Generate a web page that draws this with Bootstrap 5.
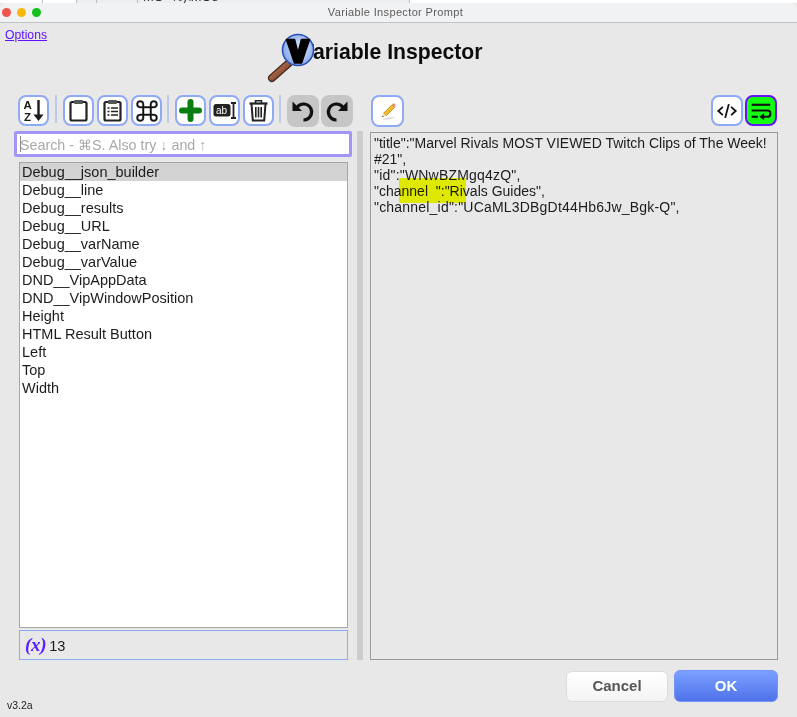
<!DOCTYPE html>
<html lang="en">
<head>
<meta charset="utf-8">
<title>Variable Inspector Prompt</title>
<link href="https://cdn.jsdelivr.net/npm/bootstrap@5.3.0/dist/css/bootstrap.min.css" rel="stylesheet">
<style>
html,body{height:100%;}
body{margin:0;width:797px;height:717px;overflow:hidden;background:#e8e8e8;font-family:"Liberation Sans",Arial,sans-serif;font-size:14px;color:#1c1c1c;}
.behind-strip{height:3px;background:#fff;overflow:hidden;}
.behind-strip-inner{height:3px;margin-left:42px;width:368px;position:relative;border-left:1px solid #bbb;border-right:1px solid #bbb;background:linear-gradient(90deg,#fff 0 33px,#bbb 33px 34px,#eee 34px 53px,#bbb 53px 54px,#eee 54px 94px,#bbb 94px 95px,#eee 95px);}
.behind-text{position:absolute;left:100px;top:-10px;font-size:13px;line-height:13px;color:#333;white-space:nowrap;}
.title-bar{height:20px;background:#f1f2f4;border-bottom:1px solid #c2c2c2;border-radius:6px 6px 0 0;padding-left:2px;}
.tl-dot{width:9px;height:9px;border-radius:50%;margin-right:6px;}
.tl-red{background:#f0544c;}.tl-yellow{background:#f6b90f;}.tl-green{background:#12c21a;}
.title-text{width:100%;margin-left:-49px;text-align:center;font-size:11px;color:#5c5c5c;letter-spacing:.36px;}
.head-row{height:72px;position:relative;padding-left:5px;padding-top:5px;}
.opt-link{font-size:12.2px;line-height:15px;color:#5b12ff;}
.opt-link:hover{color:#5b12ff;}
.app-heading{position:relative;margin:0;margin-left:253px;margin-top:12px;font-size:21.2px;font-weight:700;line-height:24px;color:#0c0c0c;font-family:"Liberation Sans",Arial,sans-serif;}
.app-logo{position:absolute;left:-37px;top:-14px;width:60px;height:60px;}
.tool-row{height:32px;padding-left:18px;padding-right:20px;}
.tool-btn{width:31px;height:31px;padding:0;background:#fff;border:2px solid #8eaaf6;border-radius:8px;margin-right:3px;}
.tool-btn:hover{background:#fff;border-color:#8eaaf6;}
.tool-btn svg{display:block;margin:auto;}
.tool-btn.is-off{width:32px;height:32px;background:#c6c6c6;border-color:#c6c6c6;margin-right:2px;}
.tool-btn.is-on{width:32px;background:#12ff12;border-color:#6414f5;}
.tool-sep{width:2px;height:28px;background:#bcc9ec;margin:0 6px 0 2px;}
.tool-sep:first-of-type{margin-left:3px;}
.pencil-btn{width:33px;height:32px;margin-left:16px;}
.tool-end{width:32px;margin-left:auto;margin-right:2px;}
.work-row{margin-top:4px;height:529px;}
.left-col{width:338px;margin-left:14px;}
.search-wrap{position:relative;}
.search-box{height:26px;padding:2px 0 0 3px;border:3px solid #a196f8;border-radius:2px;font-size:14.3px;background:#fff;box-shadow:none;font-family:"Liberation Sans",Arial,sans-serif;}
.search-box::placeholder{color:#a9a9a9;opacity:1;}
.search-caret{position:absolute;left:6px;top:5px;width:1px;height:16px;background:#8a8a8a;}
.var-list{margin:5px 4px 0 5px;height:466px;border:1px solid #a6a6a6;border-radius:0;background:#fff;padding:0;display:block;}
.var-item{height:18px;line-height:18px;padding:0 0 0 2px;border:0;font-size:14.5px;color:#1c1c1c;background:#fff;}
.var-item.is-picked{background:#d3d3d3;}
.count-bar{margin:2px 4px 0 5px;height:30px;border:1px solid #8eaaf6;padding-left:5px;font-size:14.5px;}
.fx-mark{font-family:"Liberation Serif",serif;font-weight:700;font-style:italic;font-size:19px;color:#5a1cff;margin-right:3px;letter-spacing:-.3px;}
.count-num{padding-top:3px;}
.split-bar{width:6px;margin-left:5px;background:#cdcdcd;}
.out-pane{position:relative;width:408px;margin-left:7px;margin-top:1px;border:1px solid #9a9a9a;padding:2px 3px;line-height:16px;font-size:14px;overflow:hidden;color:#1c1c1c;}
.out-line{white-space:pre-wrap;}
.out-line.is-loose{letter-spacing:.2px;}
.hl-mark{position:absolute;left:28px;top:45px;width:67px;height:25px;background:#f6ff00;mix-blend-mode:multiply;}
.foot-row{height:57px;position:relative;padding-right:19px;padding-top:10px;}
.ver-text{position:absolute;left:7px;top:39px;font-size:10.500px;line-height:12px;color:#222;}
.act-btn{height:32px;padding:0;font-size:15px;font-weight:700;border-radius:6px;}
.cancel-btn{width:102px;margin-right:6px;margin-top:1px;height:31px;background:linear-gradient(#fff,#f4f4f4);border:1px solid #dcdcdc;color:#555;}
.cancel-btn:hover{background:#fff;border-color:#dcdcdc;color:#555;}
.ok-btn{width:104px;background:linear-gradient(#7ba0ff,#4f72ea);border:1px solid #7496f8;color:#fff;}
.ok-btn:hover{background:#5f85f2;border-color:#7496f8;color:#fff;}
</style>
</head>
<body>
<div class="behind-strip"><div class="behind-strip-inner"><span class="behind-text">MO_%)\MO8</span></div></div>
<div class="title-bar d-flex align-items-center">
  <span class="tl-dot tl-red flex-shrink-0"></span><span class="tl-dot tl-yellow flex-shrink-0"></span><span class="tl-dot tl-green flex-shrink-0"></span>
  <div class="title-text">Variable Inspector Prompt</div>
</div>
<div class="head-row d-flex align-items-start">
  <a href="#" class="opt-link">Options</a>
  <h1 class="app-heading">Variable Inspector
    <svg class="app-logo" viewBox="0 0 60 60" aria-hidden="true">
      <defs>
        <radialGradient id="lensFill" cx=".55" cy=".45" r=".6"><stop offset="0" stop-color="#e4ecff"/><stop offset="1" stop-color="#7ea2ea"/></radialGradient>
        <linearGradient id="stickFill" x1="0" y1="0" x2="1" y2="1"><stop offset="0" stop-color="#c98562"/><stop offset="1" stop-color="#6d2f1a"/></linearGradient>
      </defs>
      <path d="M26 37 L9 52" stroke="#3c2a20" stroke-width="8" stroke-linecap="round" fill="none"/>
      <path d="M26 37 L9 52" stroke="url(#stickFill)" stroke-width="5.600" stroke-linecap="round" fill="none"/>
      <circle cx="35" cy="24" r="15.500" fill="url(#lensFill)" stroke="#2a4fb4" stroke-width="1.600"/>
      <path d="M23.500 13.500 L31.500 13.500 L35 27 L38.500 13.500 L46.500 13.500 L38.500 37 L31.500 37 Z" fill="#000" stroke="#000" stroke-width="1.600" stroke-linejoin="round"/>
    </svg>
  </h1>
</div>
<div class="tool-row d-flex align-items-start">
  <button class="btn tool-btn" aria-label="Sort"><svg width="27" height="27" viewBox="0 0 27 27"><text x="3.500" y="12" font-family="Liberation Sans" font-weight="700" font-size="11.500" fill="#1a1a1a">A</text><text x="4" y="24" font-family="Liberation Sans" font-weight="700" font-size="11.500" fill="#1a1a1a">Z</text><path d="M18.500 3V21" stroke="#1a1a1a" stroke-width="2.400"/><path d="M13.500 17.500H23.500L18.500 24Z" fill="#1a1a1a"/></svg></button>
  <span class="tool-sep"></span>
  <button class="btn tool-btn" aria-label="Copy"><svg width="27" height="27" viewBox="0 0 27 27"><rect x="5.500" y="5" width="16" height="18.500" rx="1.500" fill="none" stroke="#222" stroke-width="2.200"/><rect x="9" y="3" width="9" height="4" rx="1" fill="#555"/></svg></button>
  <button class="btn tool-btn" aria-label="Paste list"><svg width="27" height="27" viewBox="0 0 27 27"><rect x="5.500" y="5" width="16" height="18.500" rx="1.500" fill="none" stroke="#222" stroke-width="2.200"/><rect x="9" y="3" width="9" height="4" rx="1" fill="#555"/><path d="M8.500 11h2M12 11h7M8.500 14.500h2M12 14.500h7M8.500 18h2M12 18h7" stroke="#222" stroke-width="1.600"/></svg></button>
  <button class="btn tool-btn" aria-label="Command"><svg width="24" height="24" viewBox="0 0 16 16" fill="#111" stroke="#111" stroke-width=".3"><path d="M3.500 2A1.500 1.500 0 0 1 5 3.500V5H3.500a1.500 1.500 0 1 1 0-3zM6 5V3.500A2.500 2.500 0 1 0 3.500 6H5v4H3.500A2.500 2.500 0 1 0 6 12.500V11h4v1.500a2.500 2.500 0 1 0 2.500-2.500H11V6h1.500A2.500 2.500 0 1 0 10 3.500V5H6zm4 1v4H6V6h4zm1-1V3.500A1.500 1.500 0 1 1 12.500 5H11zm0 6h1.500a1.500 1.500 0 1 1-1.500 1.500V11zm-6 0v1.500A1.500 1.500 0 1 1 3.500 11H5z"/></svg></button>
  <span class="tool-sep"></span>
  <button class="btn tool-btn" aria-label="Add"><svg width="27" height="27" viewBox="0 0 27 27"><path d="M13.500 5V22M5 13.500H22" stroke="#0a7d12" stroke-width="6" stroke-linecap="round"/></svg></button>
  <button class="btn tool-btn" aria-label="Rename"><svg width="27" height="27" viewBox="0 0 27 27"><rect x="2.500" y="7" width="17" height="12.500" rx="2.500" fill="#222"/><text x="5" y="16.500" font-family="Liberation Sans" font-size="10" fill="#fff">ab</text><path d="M22.500 6V21M20 6h5M20 21h5" stroke="#222" stroke-width="1.800" fill="none"/></svg></button>
  <button class="btn tool-btn" aria-label="Delete"><svg width="27" height="27" viewBox="0 0 27 27"><path d="M4.500 6.500H22.500" stroke="#222" stroke-width="2.200"/><path d="M10.500 6V3.800H16.500V6" stroke="#222" stroke-width="1.500" fill="none"/><path d="M6.500 7 L7.800 23.500 H19.200 L20.500 7" stroke="#222" stroke-width="2" fill="none"/><path d="M10.800 10V20.500M13.500 10V20.500M16.200 10V20.500" stroke="#222" stroke-width="1.600"/></svg></button>
  <span class="tool-sep"></span>
  <button class="btn tool-btn is-off" aria-label="Undo"><svg width="28" height="28" viewBox="0 0 28 28"><path d="M8 10.500A8 8 0 1 1 14.500 23" fill="none" stroke="#111" stroke-width="3.200"/><path d="M3.500 4.500V14H13Z" fill="#111"/></svg></button>
  <button class="btn tool-btn is-off" aria-label="Redo"><svg width="28" height="28" viewBox="0 0 28 28"><path d="M20 10.500A8 8 0 1 0 13.500 23" fill="none" stroke="#111" stroke-width="3.200"/><path d="M24.500 4.500V14H15Z" fill="#111"/></svg></button>
  <button class="btn tool-btn pencil-btn" aria-label="Edit"><svg width="20" height="20" viewBox="0 0 27 27"><path d="M6 25 Q14 21 24 22 Q14 26 6 25Z" fill="#d4d4d4"/><path d="M19 5 L22.500 8.500 L11 20 L7.500 16.500Z" fill="#f2bb2c" stroke="#a9761a" stroke-width="1"/><path d="M19 5 L20.500 3.500 Q21.500 3 22.500 3.800 L23.500 4.800 Q24 5.800 23.500 6.500 L22.500 8.500Z" fill="#e98a80"/><path d="M7.500 16.500 L11 20 L5.500 22Z" fill="#f4d9a9"/><path d="M6.400 19.800 L7.800 21.100 L5.500 22Z" fill="#222"/></svg></button>
  <button class="btn tool-btn tool-end" aria-label="Code"><svg width="22" height="22" viewBox="0 0 24 24"><path d="M7.500 7.500 L2.500 12 L7.500 16.500M16.500 7.500 L21.500 12 L16.500 16.500M14 4.500 L10 19.500" fill="none" stroke="#111" stroke-width="2"/></svg></button>
  <button class="btn tool-btn is-on m-0" aria-label="Wrap"><svg width="24" height="24" viewBox="0 0 27 27"><path d="M3 6.500H24" stroke="#111" stroke-width="2.400"/><path d="M3 13H21Q24 13 24 16.500Q24 20 21 20H15" fill="none" stroke="#111" stroke-width="2.400"/><path d="M17 16V24L11.500 20Z" fill="#111"/><path d="M3 20H10" stroke="#111" stroke-width="2.400"/></svg></button>
</div>
<div class="work-row d-flex">
  <div class="left-col d-flex flex-column">
    <div class="search-wrap">
      <input type="text" class="form-control search-box" placeholder="Search - ⌘S. Also try ↓ and ↑">
      <span class="search-caret"></span>
    </div>
    <div class="list-group var-list">
      <div class="list-group-item var-item is-picked">Debug__json_builder</div>
      <div class="list-group-item var-item">Debug__line</div>
      <div class="list-group-item var-item">Debug__results</div>
      <div class="list-group-item var-item">Debug__URL</div>
      <div class="list-group-item var-item">Debug__varName</div>
      <div class="list-group-item var-item">Debug__varValue</div>
      <div class="list-group-item var-item">DND__VipAppData</div>
      <div class="list-group-item var-item">DND__VipWindowPosition</div>
      <div class="list-group-item var-item">Height</div>
      <div class="list-group-item var-item">HTML Result Button</div>
      <div class="list-group-item var-item">Left</div>
      <div class="list-group-item var-item">Top</div>
      <div class="list-group-item var-item">Width</div>
    </div>
    <div class="count-bar d-flex align-items-center"><span class="fx-mark">(x)</span><span class="count-num">13</span></div>
  </div>
  <div class="split-bar"></div>
  <div class="out-pane">
    <div class="out-line">"title":"Marvel Rivals MOST VIEWED Twitch Clips of The Week! #21",</div>
    <div class="out-line is-loose">"id":"WNwBZMgq4zQ",</div>
    <div class="out-line">"channel  ":"Rivals Guides",</div>
    <div class="out-line is-loose">"channel_id":"UCaML3DBgDt44Hb6Jw_Bgk-Q",</div>
    <span class="hl-mark"></span>
  </div>
</div>
<div class="foot-row d-flex justify-content-end align-items-start">
  <span class="ver-text">v3.2a</span>
  <button class="btn act-btn cancel-btn">Cancel</button>
  <button class="btn act-btn ok-btn">OK</button>
</div>
<script src="https://cdn.jsdelivr.net/npm/bootstrap@5.3.0/dist/js/bootstrap.bundle.min.js"></script>
</body>
</html>
